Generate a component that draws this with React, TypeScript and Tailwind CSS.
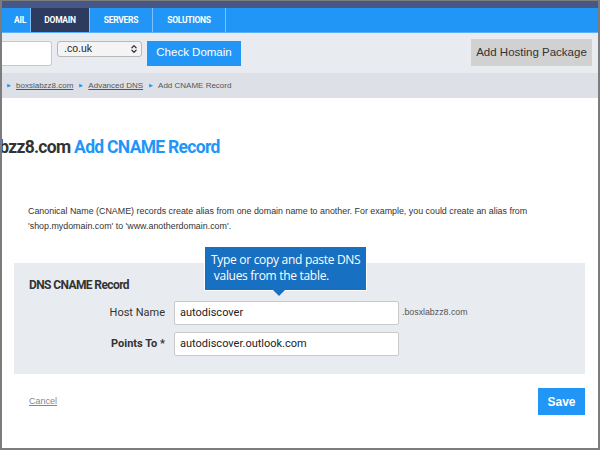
import { ChevronsUpDown } from "lucide-react";

export default function App() {
  const tabs = [
    { label: "AIL", w: "w-[29px]", active: false, pad: "justify-end pr-[4px]" },
    { label: "DOMAIN", w: "w-[59px]", active: true, pad: "justify-center" },
    { label: "SERVERS", w: "w-[63px]", active: false, pad: "justify-center" },
    { label: "SOLUTIONS", w: "w-[73px]", active: false, pad: "justify-center" },
  ];

  return (
    <div className="w-[600px] h-[450px] overflow-hidden border-x-2 border-b-2 border-t border-[#7c7c7c] bg-white font-['Liberation_Sans',Arial,sans-serif] flex flex-col">
      {/* top strip */}
      <div className="h-[7px] bg-[#475886] shrink-0" />

      {/* nav */}
      <div className="h-[25px] bg-[#2196f7] flex shrink-0 border-b border-[#5ab0ff]">
        {tabs.map((t) => (
          <div
            key={t.label}
            className={`${t.w} ${t.pad} flex items-center border-r border-[#7fc0ff] text-[8.5px] font-bold tracking-[-0.3px] text-white font-['Roboto',sans-serif] ${
              t.active ? "bg-[#2c3b5e]" : ""
            }`}
          >
            {t.label}
          </div>
        ))}
      </div>

      {/* search bar */}
      <div className="h-[40px] bg-[#e8ebef] flex items-center shrink-0">
        <div className="w-[50px] h-[25px] bg-white border border-[#c8c8c8] rounded-r-[3px] border-l-0" />
        <div className="ml-[5px] w-[85px] h-[16px] -mt-[8px] bg-[#f4f4f4] border border-[#b8b8b8] rounded-[3px] flex items-center justify-between pl-[6px] pr-[2px] text-[10.5px] text-[#222]">
          <span>.co.uk</span>
          <ChevronsUpDown size={10} strokeWidth={3} className="text-[#333]" />
        </div>
        <button className="ml-[5px] w-[94px] h-[25px] bg-[#2196f7] text-white text-[11.5px] whitespace-nowrap">
          Check Domain
        </button>
        <div className="flex-1" />
        <button className="mr-[6px] -mt-[1px] w-[121px] h-[27px] bg-[#d1d1d1] text-[#333] text-[11.5px] whitespace-nowrap">
          Add Hosting Package
        </button>
      </div>

      {/* breadcrumb */}
      <div className="h-[25px] bg-[#dde1e7] flex items-center gap-[6px] pl-[5px] text-[8px] text-[#555] shrink-0 whitespace-nowrap">
        <span className="flex items-center gap-[5px]">
          <span className="text-[#2196f7] text-[5px]">▶</span>
          <span className="underline">boxslabzz8.com</span>
        </span>
        <span className="flex items-center gap-[5px]">
          <span className="text-[#2196f7] text-[5px]">▶</span>
          <span className="underline">Advanced DNS</span>
        </span>
        <span className="flex items-center gap-[5px]">
          <span className="text-[#2196f7] text-[5px]">▶</span>
          <span>Add CNAME Record</span>
        </span>
      </div>

      {/* title */}
      <div className="mt-[37px] h-[24px] flex items-center overflow-hidden whitespace-nowrap">
        <h1 className="-ml-[50px] text-[17.5px] font-bold tracking-[-0.7px] font-['Roboto',sans-serif]">
          <span className="text-[#333]">boxslabzz8.com </span>
          <span className="text-[#2196f7]">Add CNAME Record</span>
        </h1>
      </div>

      {/* description */}
      <p className="mt-[45px] ml-[26px] text-[8.9px] leading-[15px] text-[#333] whitespace-nowrap">
        Canonical Name (CNAME) records create alias from one domain name to another. For example, you could create an alias from
        <br />
        'shop.mydomain.com' to 'www.anotherdomain.com'.
      </p>

      {/* panel */}
      <div className="relative mt-[29px] ml-[12px] w-[571px] h-[111px] bg-[#e8ecf0] pt-[14px]">
        <div className="absolute left-[190px] -top-[17px] w-[163px] h-[45px] bg-[#1770c2] border border-white text-white text-[12px] leading-[16px] pl-[6px] pt-[5px] font-['Open_Sans',sans-serif] tracking-[-0.3px] whitespace-nowrap">
          Type or copy and paste DNS
          <br />
          &nbsp;values from the table.
          <div className="absolute left-[68px] -bottom-[6px] w-0 h-0 border-x-[6px] border-x-transparent border-t-[6px] border-t-[#1770c2]" />
        </div>

        <h2 className="ml-[15px] text-[12px] leading-[16px] font-bold text-[#333] tracking-[-0.6px] font-['Roboto',sans-serif]">
          DNS CNAME Record
        </h2>

        <div className="mt-[8px] flex items-center">
          <label className="w-[160px] text-right text-[11px] text-[#333] pr-[9px] font-['Roboto',sans-serif]">
            Host Name
          </label>
          <div className="w-[225px] h-[24px] bg-white border border-[#c9c9c9] rounded-[2px] flex items-center pl-[5px] text-[11px] text-[#222] font-['Roboto',sans-serif]">
            autodiscover
          </div>
          <span className="ml-[3px] text-[8.8px] text-[#555]">.bosxlabzz8.com</span>
        </div>

        <div className="mt-[7px] flex items-center">
          <label className="w-[160px] text-right text-[11px] font-bold text-[#333] pr-[9px] font-['Roboto',sans-serif]">
            Points To *
          </label>
          <div className="w-[225px] h-[24px] bg-white border border-[#c9c9c9] rounded-[2px] flex items-center pl-[5px] text-[11px] text-[#222] font-['Roboto',sans-serif]">
            autodiscover.outlook.com
          </div>
        </div>
      </div>

      {/* actions */}
      <div className="mt-[14px] ml-[12px] w-[571px] flex items-center justify-between">
        <span className="ml-[15px] text-[9px] text-[#888] underline">Cancel</span>
        <button className="w-[47px] h-[27px] bg-[#2196f7] text-white text-[12px] font-bold">
          Save
        </button>
      </div>
    </div>
  );
}
